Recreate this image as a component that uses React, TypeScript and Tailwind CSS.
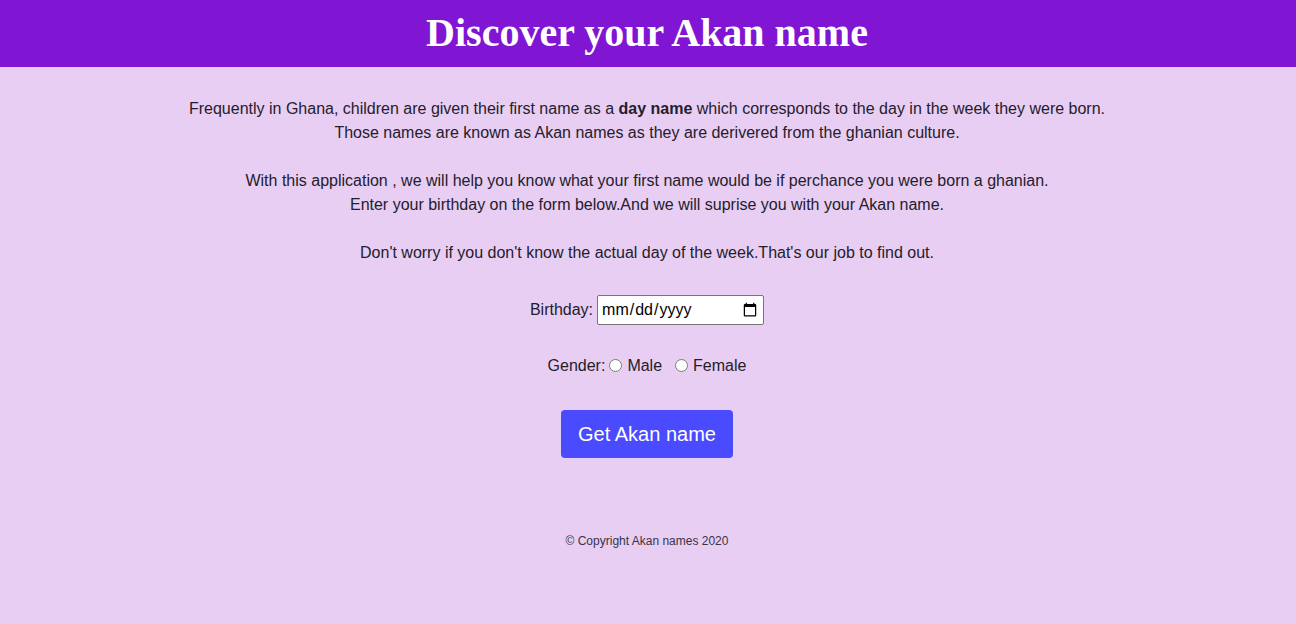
export default function App() {
  return (
    <div className="min-h-[624px] bg-[#e8cef3] text-[#24202b] font-['Liberation_Sans',Arial,sans-serif]">
      <header className="h-[67px] bg-[#8115d4] flex items-center justify-center">
        <h1 className="text-white font-bold text-[40px] leading-none font-['Liberation_Serif','Times_New_Roman',serif] pb-[2px] pr-[2px]">
          Discover your Akan name
        </h1>
      </header>

      <main className="flex flex-col items-center pt-[30px] pr-[2px] text-center text-base leading-6">
        <p>
          Frequently in Ghana, children are given their first name as a <b>day name</b> which corresponds to the day in the week they were born.
          <br />
          Those names are known as Akan names as they are derivered from the ghanian culture.
        </p>
        <p className="mt-6">
          With this application , we will help you know what your first name would be if perchance you were born a ghanian.
          <br />
          Enter your birthday on the form below.And we will suprise you with your Akan name.
        </p>
        <p className="mt-6">Don't worry if you don't know the actual day of the week.That's our job to find out.</p>

        <form className="flex flex-col items-center" onSubmit={(e) => e.preventDefault()}>
          <div className="mt-[30px] flex items-center">
            <label htmlFor="bd">Birthday:</label>
            <input
              id="bd"
              type="date"
              className="ml-1 h-[30px] w-[167px] border border-[#767676] rounded-[2px] bg-white px-[3px] text-base text-black"
            />
          </div>

          <div className="mt-[29px] flex items-center">
            <span>Gender:</span>
            <input type="radio" name="g" id="m" className="ml-[4px] w-[13px] h-[13px] mr-[5px] -mt-[2px]" />
            <label htmlFor="m">Male</label>
            <input type="radio" name="g" id="f" className="ml-[13px] w-[13px] h-[13px] mr-[5px] -mt-[2px]" />
            <label htmlFor="f">Female</label>
          </div>

          <button
            type="submit"
            className="mt-[32px] h-[48px] w-[172px] rounded-[4px] bg-[#4a4aff] text-white text-[20px]"
          >
            Get Akan name
          </button>
        </form>

        <footer className="mt-[75px] text-xs text-[#3a3345]">© Copyright Akan names 2020</footer>
      </main>
    </div>
  );
}
